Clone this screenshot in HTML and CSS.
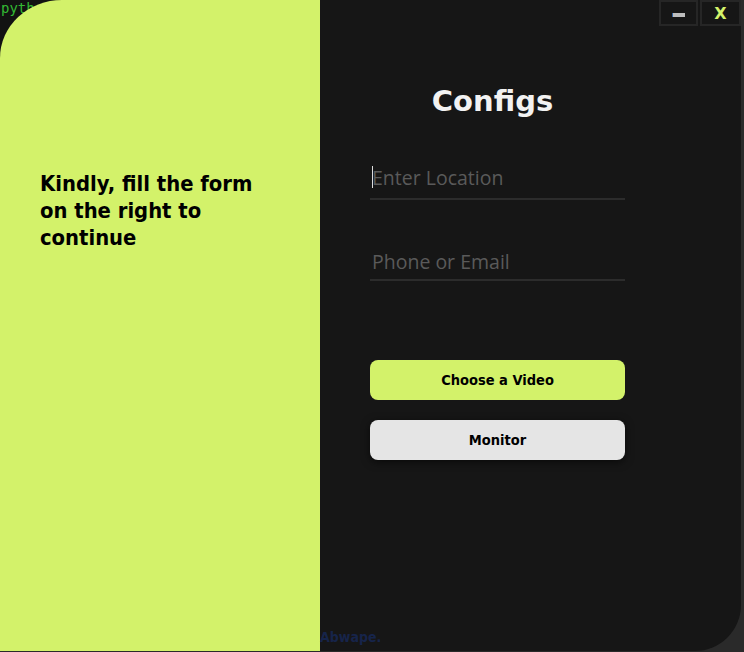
FILE: index.html
```html
<!DOCTYPE html>
<html>
<head>
<meta charset="utf-8">
<link rel="stylesheet" href="styles.css">
</head>
<body>
<div class="backdrop">pyth</div>
<div class="window">
  <section class="left">
    <p class="prompt">Kindly, fill the form on the right to continue</p>
  </section>
  <section class="right">
    <div class="controls">
      <button class="ctl min"><span class="bar"></span></button>
      <button class="ctl close">X</button>
    </div>
    <div class="form">
      <h1 class="title">Configs</h1>
      <div class="field first"><span class="caret"></span><span class="ph">Enter Location</span></div>
      <div class="field second"><span class="ph">Phone or Email</span></div>
      <button class="btn primary">Choose a Video</button>
      <button class="btn secondary">Monitor</button>
    </div>
    <div class="brand">Abwape.</div>
  </section>
</div>
</body>
</html>
```
FILE: styles.css
```css
html, body {
  margin: 0;
  padding: 0;
  width: 744px;
  height: 652px;
  overflow: hidden;
  background: #2a2a2a;
}
body {
  position: relative;
  font-family: "DejaVu Sans Condensed", "DejaVu Sans", sans-serif;
}
.backdrop {
  position: absolute;
  left: 0;
  top: 0;
  width: 120px;
  height: 60px;
  background: #121212;
  color: #33b833;
  font-family: "DejaVu Sans Mono", monospace;
  font-size: 14px;
  line-height: 16px;
  padding-left: 1px;
  box-sizing: border-box;
}
.window {
  position: relative;
  display: flex;
  width: 741px;
  height: 651px;
}
.left {
  width: 320px;
  flex: none;
  background: #d3f26a;
  border-top-left-radius: 62px 58px;
  padding: 170px 0 0 40px;
  box-sizing: border-box;
}
.prompt {
  margin: 0;
  width: 232px;
  font-weight: bold;
  font-size: 21.8px;
  line-height: 27px;
  color: #000;
}
.right {
  position: relative;
  flex: 1;
  background: #161616;
  border-bottom-right-radius: 46px;
  display: flex;
  flex-direction: column;
}
.controls {
  position: absolute;
  top: 0;
  right: 0;
  display: flex;
  gap: 2px;
}
.ctl {
  width: 39px;
  height: 26px;
  margin: 0;
  padding: 0;
  background: #161616;
  border: 2px solid #262626;
  box-sizing: border-box;
  display: flex;
  align-items: center;
  justify-content: center;
  font-family: "DejaVu Sans", sans-serif;
}
.ctl.close {
  width: 41px;
  color: #d3f26a;
  font-weight: bold;
  font-size: 16px;
}
.bar {
  display: block;
  width: 12px;
  height: 4px;
  margin-top: 4px;
  background: #bdbdbd;
  border-left: 1px solid #2d5e9e;
}
.form {
  display: flex;
  flex-direction: column;
  width: 255px;
  margin-left: 50px;
}
.title {
  margin: 81px 0 0 -10px;
  text-align: center;
  color: #f2f2f2;
  font-family: "DejaVu Sans", sans-serif;
  font-weight: bold;
  font-size: 29px;
  line-height: 40px;
}
.field {
  position: relative;
  height: 36px;
  border-bottom: 2px solid #2c2c2c;
  display: flex;
  align-items: flex-end;
  padding: 0 0 8px 2px;
  box-sizing: border-box;
}
.field.first {
  margin-top: 43px;
}
.field.second {
  margin-top: 45px;
  padding-bottom: 5px;
}
.ph {
  font-family: "Open Sans", sans-serif;
  font-size: 19.5px;
  line-height: 24px;
  color: #5a5a5a;
}
.caret {
  position: absolute;
  left: 2px;
  top: 2px;
  width: 1px;
  height: 22px;
  background: #dcdcdc;
}
.btn {
  height: 40px;
  margin: 0;
  border: none;
  border-radius: 8px;
  font-family: "DejaVu Sans Condensed", "DejaVu Sans", sans-serif;
  font-weight: bold;
  font-size: 14.5px;
  color: #000;
  padding: 0;
}
.primary {
  margin-top: 79px;
  background: #d3f26a;
}
.secondary {
  margin-top: 20px;
  background: #e5e5e5;
  box-shadow: 0 2px 8px rgba(0, 0, 0, 0.6);
}
.brand {
  position: absolute;
  left: 0;
  bottom: 6px;
  color: #16244a;
  font-family: "DejaVu Sans Condensed", "DejaVu Sans", sans-serif;
  font-weight: bold;
  font-size: 14px;
}
```
